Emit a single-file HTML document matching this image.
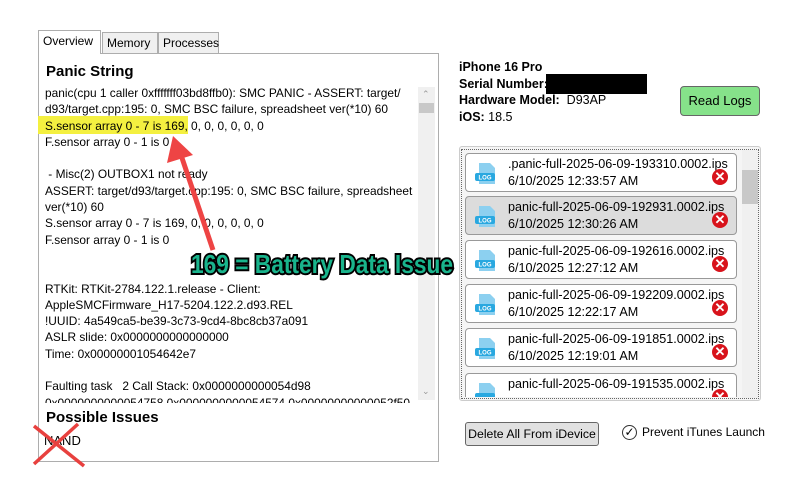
<!DOCTYPE html>
<html><head><meta charset="utf-8"><style>
*{margin:0;padding:0;box-sizing:border-box}
body{width:800px;height:483px;background:#fff;font-family:"Liberation Sans",sans-serif;position:relative;overflow:hidden;color:#000}
.a{position:absolute}
.tab{position:absolute;top:32px;height:21px;border:1px solid #adadad;border-bottom:none;background:#f0f0f0;font-size:12px;padding:3px 4px 0}
.panel{position:absolute;left:38px;top:53px;width:401px;height:409px;border:1px solid #adadad;background:#fff}
.txt{position:absolute;left:45px;top:85px;width:372px;height:318px;overflow:hidden;font-size:11.9px;line-height:16.3px;white-space:nowrap}
.item{position:absolute;left:465px;width:272px;height:39px;border:1px solid #999;border-radius:4px;background:#fff;font-size:12.6px}
.item .n{position:absolute;left:42px;top:3px;width:228px;overflow:hidden;white-space:nowrap}
.item .d{position:absolute;left:42px;top:20px}
.ic{position:absolute;left:9px;top:8px;width:23px;height:23px}
.x{position:absolute;left:246px;top:15px;width:16px;height:16px;border-radius:50%;background:#d8131b;color:#fff;font-size:13px;font-weight:bold;text-align:center;line-height:16px}
</style></head><body>
<div class="panel"></div>
<div class="tab" style="left:38px;top:30px;height:24px;width:63px;background:#fff;border-color:#adadad;z-index:2">Overview</div>
<div class="tab" style="left:102px;width:56px">Memory</div>
<div class="tab" style="left:158px;width:61px">Processes</div>
<div class="a" style="left:46px;top:63px;font-size:15px;font-weight:bold">Panic String</div>
<div class="a" style="left:38px;top:116px;width:150px;height:18px;background:#f4f040"></div>
<div class="txt">panic(cpu 1 caller 0xfffffff03bd8ffb0): SMC PANIC - ASSERT: target/<br>d93/target.cpp:195: 0, SMC BSC failure, spreadsheet ver(*10) 60<br>S.sensor array 0 - 7 is 169, 0, 0, 0, 0, 0, 0<br>F.sensor array 0 - 1 is 0<br><br>&nbsp;- Misc(2) OUTBOX1 not ready<br>ASSERT: target/d93/target.cpp:195: 0, SMC BSC failure, spreadsheet<br>ver(*10) 60<br>S.sensor array 0 - 7 is 169, 0, 0, 0, 0, 0, 0<br>F.sensor array 0 - 1 is 0<br><br><br>RTKit: RTKit-2784.122.1.release - Client:<br>AppleSMCFirmware_H17-5204.122.2.d93.REL<br>!UUID: 4a549ca5-be39-3c73-9cd4-8bc8cb37a091<br>ASLR slide: 0x0000000000000000<br>Time: 0x00000001054642e7<br><br>Faulting task &nbsp;&nbsp;2 Call Stack: 0x0000000000054d98<br>0x0000000000054758 0x0000000000054574 0x00000000000052f50</div>
<div class="a" style="left:418px;top:87px;width:17px;height:313px;background:#f0f0f0"></div>
<div class="a" style="left:419px;top:103px;width:15px;height:10px;background:#c8c8c8"></div>
<div class="a" style="left:422px;top:89px;font-size:9px;color:#999">&#8963;</div>
<div class="a" style="left:422px;top:386px;font-size:9px;color:#999">&#8964;</div>
<div class="a" style="left:46px;top:409px;font-size:15px;font-weight:bold">Possible Issues</div>
<div class="a" style="left:44px;top:433px;font-size:13px">NAND</div>
<svg class="a" style="left:0;top:0" width="800" height="483">
<line x1="34" y1="426" x2="84" y2="466" stroke="#e8403e" stroke-width="3.5"/>
<line x1="78" y1="424" x2="34" y2="464" stroke="#e8403e" stroke-width="3.5"/>
<line x1="213" y1="250" x2="181" y2="155" stroke="#ee4444" stroke-width="5"/>
<polygon points="173,136 167,163 193,155" fill="#ee4444"/>
<text x="191" y="273" textLength="262" lengthAdjust="spacingAndGlyphs" font-family="Liberation Sans" font-weight="bold" font-size="26" fill="#19b48c" stroke="#000" stroke-width="4" paint-order="stroke">169 = Battery Data Issue</text>
</svg>
<div class="a" style="left:459px;top:59px;font-size:12.5px;line-height:16.5px"><b>iPhone 16 Pro</b><br><b>Serial Number:</b><br><b>Hardware Model:</b>&nbsp; D93AP<br><b>iOS:</b> 18.5</div>
<div class="a" style="left:546px;top:74px;width:101px;height:20px;background:#000"></div>
<div class="a" style="left:680px;top:86px;width:80px;height:30px;border:1px solid #666;border-radius:4px;background:#86e28a;font-size:13px;text-align:center;line-height:28px">Read Logs</div>
<div class="a" style="left:459px;top:146px;width:302px;height:255px;border:1px solid #ccc;border-radius:3px;background:#f5f5f5"></div>
<div class="a" style="left:461px;top:149px;width:298px;height:250px;border:1px dotted #666"></div>
<div class="a" style="left:742px;top:150px;width:16px;height:248px;background:#f0f0f0"></div>
<div class="a" style="left:742px;top:170px;width:16px;height:34px;background:#c8c8c8"></div>
<div style="position:absolute;left:0;top:0;width:800px;height:397px;overflow:hidden">
<div class="item" style="top:153px"><svg class="ic"><path d="M4 1h11l5 5v16H4z" fill="#8cd0f0"/><rect x="0" y="11" width="20" height="8" rx="2" fill="#29a8e0"/><text x="10" y="17.5" font-size="6" fill="#fff" text-anchor="middle" font-weight="bold" font-family="Liberation Sans">LOG</text></svg><div class="n">.panic-full-2025-06-09-193310.0002.ips</div><div class="d">6/10/2025 12:33:57 AM</div><div class="x">✕</div></div>
<div class="item" style="top:196px;background:#dcdcdc"><svg class="ic"><path d="M4 1h11l5 5v16H4z" fill="#8cd0f0"/><rect x="0" y="11" width="20" height="8" rx="2" fill="#29a8e0"/><text x="10" y="17.5" font-size="6" fill="#fff" text-anchor="middle" font-weight="bold" font-family="Liberation Sans">LOG</text></svg><div class="n">panic-full-2025-06-09-192931.0002.ips</div><div class="d">6/10/2025 12:30:26 AM</div><div class="x">✕</div></div>
<div class="item" style="top:240px"><svg class="ic"><path d="M4 1h11l5 5v16H4z" fill="#8cd0f0"/><rect x="0" y="11" width="20" height="8" rx="2" fill="#29a8e0"/><text x="10" y="17.5" font-size="6" fill="#fff" text-anchor="middle" font-weight="bold" font-family="Liberation Sans">LOG</text></svg><div class="n">panic-full-2025-06-09-192616.0002.ips</div><div class="d">6/10/2025 12:27:12 AM</div><div class="x">✕</div></div>
<div class="item" style="top:284px"><svg class="ic"><path d="M4 1h11l5 5v16H4z" fill="#8cd0f0"/><rect x="0" y="11" width="20" height="8" rx="2" fill="#29a8e0"/><text x="10" y="17.5" font-size="6" fill="#fff" text-anchor="middle" font-weight="bold" font-family="Liberation Sans">LOG</text></svg><div class="n">panic-full-2025-06-09-192209.0002.ips</div><div class="d">6/10/2025 12:22:17 AM</div><div class="x">✕</div></div>
<div class="item" style="top:328px"><svg class="ic"><path d="M4 1h11l5 5v16H4z" fill="#8cd0f0"/><rect x="0" y="11" width="20" height="8" rx="2" fill="#29a8e0"/><text x="10" y="17.5" font-size="6" fill="#fff" text-anchor="middle" font-weight="bold" font-family="Liberation Sans">LOG</text></svg><div class="n">panic-full-2025-06-09-191851.0002.ips</div><div class="d">6/10/2025 12:19:01 AM</div><div class="x">✕</div></div>
<div class="item" style="top:373px"><svg class="ic"><path d="M4 1h11l5 5v16H4z" fill="#8cd0f0"/><rect x="0" y="11" width="20" height="8" rx="2" fill="#29a8e0"/></svg><div class="n">panic-full-2025-06-09-191535.0002.ips</div><div class="x">✕</div></div>
</div>
<div class="a" style="left:465px;top:422px;width:134px;height:24px;border:1px solid #666;border-radius:3px;background:#e1e1e1;font-size:12.3px;text-align:center;line-height:22px">Delete All From iDevice</div>
<div class="a" style="left:622px;top:425px;width:15px;height:15px;border:1px solid #333;border-radius:50%;font-size:12px;line-height:13px;text-align:center">✓</div>
<div class="a" style="left:642px;top:425px;font-size:12px">Prevent iTunes Launch</div>
</body></html>
